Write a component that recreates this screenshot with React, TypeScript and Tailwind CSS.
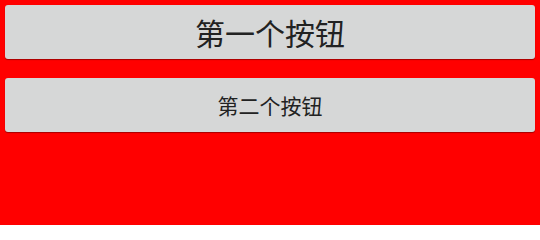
const font = { fontFamily: '"Noto Sans CJK SC", "Noto Sans", sans-serif' };

export default function App() {
  return (
    <div className="w-[540px] h-[225px] bg-[#ff0000] flex flex-col gap-[19px] p-[5px]" style={font}>
      <button className="h-[54px] w-full rounded-[3px] bg-[#d6d7d7] text-[#222222] text-[30px] leading-none shadow-[0_1px_1px_rgba(0,0,0,0.35)] flex items-center justify-center">
        第一个按钮
      </button>
      <button className="h-[54px] w-full rounded-[3px] bg-[#d6d7d7] text-[#222222] text-[21px] leading-none shadow-[0_1px_1px_rgba(0,0,0,0.35)] flex items-center justify-center">
        第二个按钮
      </button>
    </div>
  );
}
